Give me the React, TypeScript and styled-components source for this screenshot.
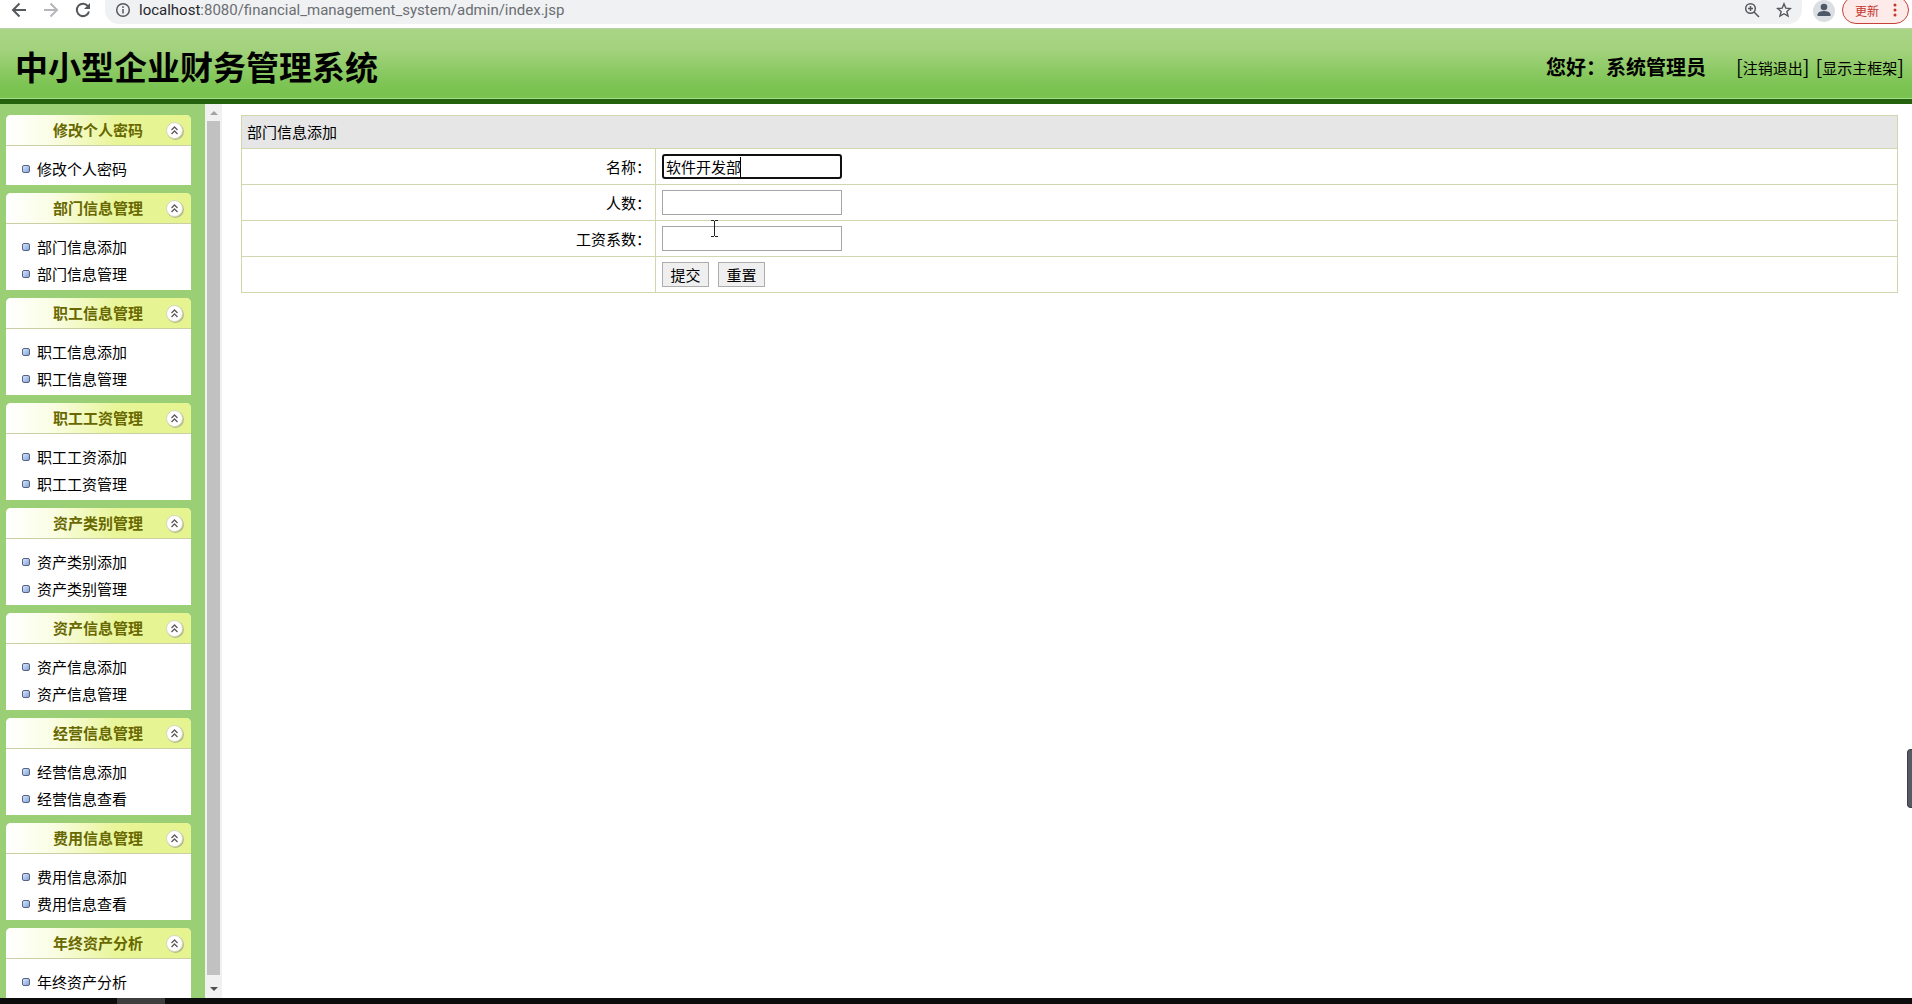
import React, { useState } from "react";
import styled, { createGlobalStyle } from "styled-components";

const Global = createGlobalStyle`
  *, *::before, *::after { box-sizing: border-box; }
  body { margin: 0; background: #fff; color: #000; font: 15px/27px "Noto Sans CJK SC", sans-serif; }
  button, input { font: inherit; color: inherit; }
`;

const Page = styled.div`
  display: flex;
  flex-direction: column;
  height: 100vh;
  overflow: hidden;
`;

const BrowserBar = styled.div`
  display: flex;
  align-items: flex-start;
  flex: none;
  height: 28px;
  padding: 0 3px 0 8px;
  overflow: hidden;
  color: #5f6368;
`;

const IconButton = styled.button<{ $faded?: boolean }>`
  display: flex;
  align-items: center;
  justify-content: center;
  flex: none;
  width: 22px;
  height: 20px;
  padding: 0;
  border: 0;
  background: none;
  color: ${(p) => (p.$faded ? "#b4b6b9" : "#55585c")};
`;

const NavGroup = styled.div`
  display: flex;
  gap: 10px;
  margin-right: 11px;
`;

const AddressBar = styled.div`
  display: flex;
  align-items: flex-start;
  flex: 1;
  gap: 10px;
  height: 24px;
  padding: 0 7px;
  border-radius: 0 0 14px 14px;
  background: #f0f1f3;
`;

const Url = styled.span`
  flex: 1;
  margin-left: -5px;
  color: #6a6e72;
  font: 15px/20px Roboto, sans-serif;
  b { color: #26282b; font-weight: 400; }
`;

const Avatar = styled.button`
  display: flex;
  flex: none;
  width: 22px;
  height: 22px;
  margin: 0 7px 0 11px;
  padding: 0;
  border: 0;
  border-radius: 50%;
  background: #dbdee3;
`;

const UpdateButton = styled.button`
  display: flex;
  align-items: center;
  justify-content: space-between;
  flex: none;
  width: 67px;
  height: 28px;
  margin-top: -4px;
  padding: 0 11px 0 12px;
  border: 1px solid #c5413a;
  border-radius: 14px;
  background: #fdebea;
  color: #c5332b;
  font-size: 12px;
`;

const Header = styled.header`
  display: flex;
  align-items: center;
  justify-content: space-between;
  flex: none;
  height: 76px;
  padding: 4px 8px 0 15px;
  border-top: 1px solid #b9cfa6;
  border-bottom: 5px solid #24620f;
  background: linear-gradient(#a9d585, #a3d27d 30%, #7cc453 80%, #78c24f);
  box-shadow: inset 0 -1px #a4dd85;
`;

const Title = styled.h1`
  margin: 0;
  font-size: 33px;
  line-height: 40px;
`;

const Account = styled.div`
  display: flex;
  align-items: center;
`;

const Greeting = styled.strong`
  margin-right: 24px;
  font-size: 20px;
`;

const HeaderLink = styled.span`
  display: flex;
  align-items: center;
  margin-left: 6px;
  font-size: 20px;
  a { padding-top: 2px; color: inherit; font-size: 15px; text-decoration: none; }
`;

const Body = styled.div`
  display: flex;
  flex: 1;
  min-height: 0;
`;

const Sidebar = styled.nav`
  display: flex;
  flex-direction: column;
  flex: none;
  gap: 8px;
  width: 205px;
  padding: 11px 14px 0 6px;
  overflow: hidden;
  background: #9bcf75;
`;

const Section = styled.section`
  flex: none;
  background: #fff;
  border-radius: 5px 5px 0 0;
`;

const SectionHead = styled.button`
  display: grid;
  grid-template-columns: 24px 1fr 24px;
  align-items: center;
  width: 100%;
  height: 31px;
  padding: 0 3px 0 2px;
  border: 0;
  border-bottom: 1px solid #cbd0a4;
  border-radius: 5px 5px 0 0;
  background: linear-gradient(90deg, #fff, #fafde4 25%, #e8f598 60%, #e5f48f);
  color: #686800;
  font-weight: 700;
  text-align: center;
`;

const HeadText = styled.span`
  padding-bottom: 2px;
`;

const Links = styled.ul`
  margin: 0;
  padding: 9px 0 3px 16px;
  list-style: none;
`;

const LinkRow = styled.li`
  display: flex;
  align-items: center;
  gap: 7px;
  height: 27px;
  &::before {
    content: "";
    width: 8px;
    height: 8px;
    border: 1px solid #566384;
    border-radius: 2px;
    background: linear-gradient(135deg, #d5e4fb, #86a5d8);
  }
  a { color: #000; text-decoration: none; }
`;

const ScrollTrack = styled.div`
  display: flex;
  flex-direction: column;
  align-items: center;
  flex: none;
  width: 17px;
  background: #f1f1f1;
`;

const ScrollArrow = styled.button<{ $down?: boolean }>`
  display: flex;
  align-items: center;
  justify-content: center;
  width: 17px;
  height: ${(p) => (p.$down ? 23 : 17)}px;
  padding: ${(p) => (p.$down ? 4 : 0)}px 0 0;
  border: 0;
  background: none;
  &::before {
    content: "";
    border: 4px solid transparent;
    border-top: ${(p) => (p.$down ? "4px solid #505050" : "0")};
    border-bottom: ${(p) => (p.$down ? "0" : "4px solid #a3a3a3")};
  }
`;

const ScrollThumb = styled.div`
  flex: 1;
  width: 13px;
  background: #c1c1c1;
`;

const Main = styled.main`
  flex: 1;
  min-width: 0;
  padding: 11px 14px 0 19px;
`;

const FormTable = styled.table`
  width: 100%;
  border-collapse: collapse;
  table-layout: fixed;
  th, td { border: 1px solid #d1d6ae; }
  thead th {
    height: 33px;
    padding: 0 5px 2px;
    background: #e6e6e6;
    font-weight: 400;
    text-align: left;
  }
  tbody th, tbody td { height: 36px; padding: 0 6px; font-weight: 400; text-align: left; }
  tbody th { padding: 0 4px; text-align: right; }
`;

const FieldBox = styled.div`
  position: relative;
  width: 180px;
`;

const Field = styled.input`
  display: block;
  width: 100%;
  height: 25px;
  padding: 1px 3px;
  border: 1px solid #a5a5a9;
  background: #fff;
  line-height: 21px;
  &:focus { padding: 0 2px; border: 2px solid #101010; border-radius: 3px; outline: 0; }
`;

const Caret = styled.span`
  position: absolute;
  left: 78px;
  top: 3px;
  width: 1px;
  height: 20px;
  background: #000;
`;

const Buttons = styled.div`
  display: flex;
  gap: 9px;
`;

const FormButton = styled.button`
  width: 47px;
  height: 25px;
  padding: 0;
  border: 1px solid #adadad;
  background: #efefef;
  line-height: 21px;
`;

const PointerMark = styled.svg`
  position: absolute;
  left: 711px;
  top: 220px;
`;

const EdgeHandle = styled.div`
  position: absolute;
  right: 0;
  top: 749px;
  width: 5px;
  height: 59px;
  border: 1px solid #3b3f48;
  border-right: 0;
  border-radius: 4px 0 0 4px;
  background: #555a64;
`;

const Taskbar = styled.footer`
  flex: none;
  height: 6px;
  padding-left: 117px;
  background: #0c0c0c;
  &::before { content: ""; display: block; width: 48px; height: 6px; background: #3e3e3e; }
`;

const stroke = { fill: "none", stroke: "currentColor", strokeWidth: 2 };

const menu: { title: string; links: string[] }[] = [
  { title: "修改个人密码", links: ["修改个人密码"] },
  { title: "部门信息管理", links: ["部门信息添加", "部门信息管理"] },
  { title: "职工信息管理", links: ["职工信息添加", "职工信息管理"] },
  { title: "职工工资管理", links: ["职工工资添加", "职工工资管理"] },
  { title: "资产类别管理", links: ["资产类别添加", "资产类别管理"] },
  { title: "资产信息管理", links: ["资产信息添加", "资产信息管理"] },
  { title: "经营信息管理", links: ["经营信息添加", "经营信息查看"] },
  { title: "费用信息管理", links: ["费用信息添加", "费用信息查看"] },
  { title: "年终资产分析", links: ["年终资产分析"] },
];

function CollapseIcon() {
  return (
    <svg width="21" height="21" viewBox="0 0 21 21" fill="none">
      <circle cx="11.5" cy="11.5" r="8.5" fill="#b5bd86" />
      <circle cx="10.5" cy="10.5" r="8" fill="#fff" stroke="#d3d6bd" />
      <path d="M7.500 10l3-3 3 3M7.500 14l3-3 3 3" stroke="#5b5b5b" strokeWidth="1.3" />
    </svg>
  );
}

function MenuSection({ title, links }: { title: string; links: string[] }) {
  const [open, setOpen] = useState(true);
  return (
    <Section>
      <SectionHead aria-expanded={open} onClick={() => setOpen(!open)}>
        <span />
        <HeadText>{title}</HeadText>
        <CollapseIcon />
      </SectionHead>
      {open && (
        <Links>
          {links.map((l) => (
            <LinkRow key={l}><a href="#">{l}</a></LinkRow>
          ))}
        </Links>
      )}
    </Section>
  );
}

function Browser() {
  return (
    <BrowserBar>
      <NavGroup>
        <IconButton aria-label="后退">
          <svg width="16" height="16" viewBox="0 0 16 16" {...stroke}><path d="M15 8H2M8.500 1.500L2 8l6.500 6.500" /></svg>
        </IconButton>
        <IconButton aria-label="前进" $faded>
          <svg width="16" height="16" viewBox="0 0 16 16" {...stroke}><path d="M1 8h13M7.500 1.500L14 8l-6.500 6.500" /></svg>
        </IconButton>
        <IconButton aria-label="刷新">
          <svg width="16" height="16" viewBox="0 0 16 16"><path d="M13.200 4.500A6.200 6.200 0 1 0 14 9.500" {...stroke} /><path d="M15 1v6H9z" fill="currentColor" /></svg>
        </IconButton>
      </NavGroup>
      <AddressBar>
        <IconButton aria-label="网站信息">
          <svg width="16" height="16" viewBox="0 0 16 16" {...stroke} strokeWidth="1.5"><circle cx="8" cy="8" r="6.300" /><path d="M8 7v4.500M8 4.300v1.600" /></svg>
        </IconButton>
        <Url><b>localhost</b>:8080/financial_management_system/admin/index.jsp</Url>
        <IconButton aria-label="缩放">
          <svg width="16" height="16" viewBox="0 0 16 16" {...stroke} strokeWidth="1.500"><circle cx="6.500" cy="6.500" r="4.800" /><path d="M10 10l5 5M6.500 4v5M4 6.500h5" /></svg>
        </IconButton>
        <IconButton aria-label="收藏">
          <svg width="16" height="16" viewBox="0 0 16 16" {...stroke} strokeWidth="1.400"><path d="M8 1.800l1.800 4.300 4.600.4-3.500 3 1.100 4.600L8 11.700l-4 2.400 1.100-4.600-3.500-3 4.600-.4z" /></svg>
        </IconButton>
      </AddressBar>
      <Avatar aria-label="用户">
        <svg width="22" height="22" viewBox="0 0 22 22" fill="#4d5968"><circle cx="11" cy="7" r="3.300" /><path d="M4.500 16v-1.500c0-2.500 4-3.500 6.500-3.500s6.500 1 6.500 3.500V16z" /></svg>
      </Avatar>
      <UpdateButton>
        更新
        <svg width="4" height="14" viewBox="0 0 4 14" fill="currentColor"><circle cx="2" cy="2" r="1.500" /><circle cx="2" cy="7" r="1.500" /><circle cx="2" cy="12" r="1.500" /></svg>
      </UpdateButton>
    </BrowserBar>
  );
}

export default function App() {
  const [name, setName] = useState("软件开发部");
  return (
    <Page>
      <Global />
      <Browser />
      <Header>
        <Title>中小型企业财务管理系统</Title>
        <Account>
          <Greeting>您好：系统管理员</Greeting>
          <HeaderLink>[<a href="#">注销退出</a>]</HeaderLink>
          <HeaderLink>[<a href="#">显示主框架</a>]</HeaderLink>
        </Account>
      </Header>
      <Body>
        <Sidebar>
          {menu.map((m) => <MenuSection key={m.title} {...m} />)}
        </Sidebar>
        <ScrollTrack>
          <ScrollArrow aria-label="向上滚动" />
          <ScrollThumb />
          <ScrollArrow aria-label="向下滚动" $down />
        </ScrollTrack>
        <Main>
          <form onSubmit={(e) => e.preventDefault()}>
            <FormTable>
              <colgroup><col style={{ width: "25%" }} /><col /></colgroup>
              <thead>
                <tr><th colSpan={2}>部门信息添加</th></tr>
              </thead>
              <tbody>
                <tr>
                  <th><label htmlFor="name">名称：</label></th>
                  <td>
                    <FieldBox>
                      <Field id="name" autoFocus value={name} onChange={(e) => setName(e.target.value)} />
                      {name === "软件开发部" && <Caret />}
                    </FieldBox>
                  </td>
                </tr>
                <tr>
                  <th><label htmlFor="count">人数：</label></th>
                  <td><FieldBox><Field id="count" /></FieldBox></td>
                </tr>
                <tr>
                  <th><label htmlFor="ratio">工资系数：</label></th>
                  <td><FieldBox><Field id="ratio" /></FieldBox></td>
                </tr>
                <tr>
                  <th />
                  <td>
                    <Buttons>
                      <FormButton type="submit">提交</FormButton>
                      <FormButton type="reset">重置</FormButton>
                    </Buttons>
                  </td>
                </tr>
              </tbody>
            </FormTable>
          </form>
        </Main>
      </Body>
      <Taskbar />
      <PointerMark width="7" height="17" viewBox="0 0 7 17" fill="none" stroke="#222"><path d="M0 .5h3M4 .5h3M3.500 1v15M0 16.500h3M4 16.500h3" /></PointerMark>
      <EdgeHandle />
    </Page>
  );
}
